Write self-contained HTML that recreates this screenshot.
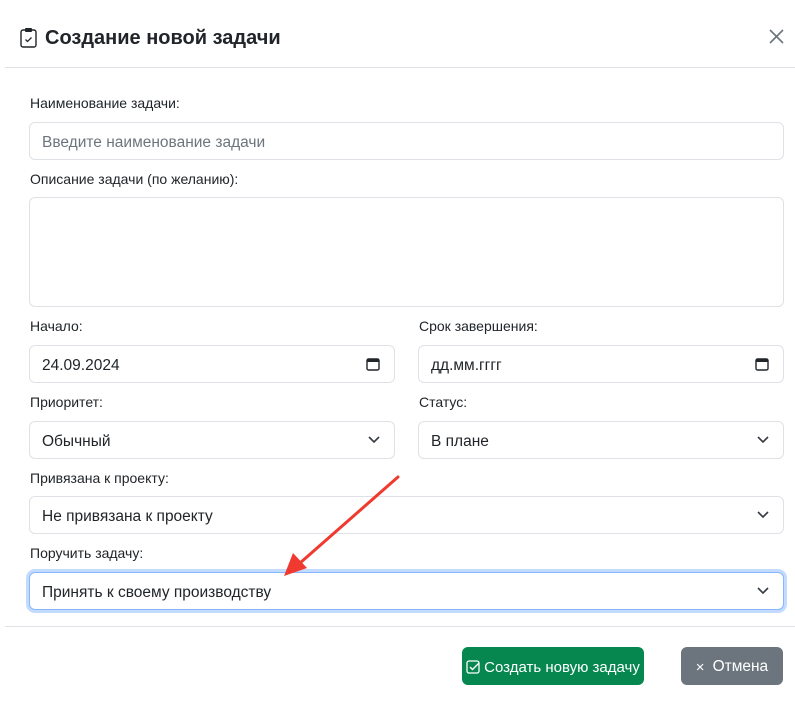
<!DOCTYPE html>
<html><head><meta charset="utf-8"><style>
*{box-sizing:border-box;margin:0;padding:0}
body{width:795px;height:712px;background:#fff;font-family:"Liberation Sans",sans-serif;color:#212529;position:relative;overflow:hidden}
.a{position:absolute}
.lbl{position:absolute;font-size:14px;color:#212529}
.in{position:absolute;border:1px solid #dee2e6;border-radius:6px;background:#fff;font-size:15.5px;padding-left:12px;padding-top:3px;display:flex;align-items:center;height:38px}
.chev{position:absolute;right:14px;top:13px}
</style></head><body>
<svg class="a" style="left:20px;top:27px" width="17" height="21" viewBox="0 0 17 21"><rect x="1" y="3" width="15" height="17" rx="2" fill="none" stroke="#212529" stroke-width="1.4"/><rect x="5" y="1" width="7" height="4" rx="1" fill="#212529"/><path d="M5.5 12.5l2 2 4-4" fill="none" stroke="#212529" stroke-width="1.3"/></svg>
<div class="a" style="left:45px;top:27px;font-size:20px;font-weight:bold;color:#212529">Создание новой задачи</div>
<svg class="a" style="left:769px;top:29px" width="15" height="15"><path d="M1 1L14 14M14 1L1 14" stroke="#6c757d" stroke-width="1.6"/></svg>
<div class="a" style="left:5px;top:67px;width:790px;height:1px;background:#dee2e6"></div>

<div class="lbl" style="left:30px;top:95px">Наименование задачи:</div>
<div class="in" style="left:29px;top:122px;width:755px;color:#6c757d">Введите наименование задачи</div>
<div class="lbl" style="left:30px;top:171px">Описание задачи (по желанию):</div>
<div class="in" style="left:29px;top:197px;width:755px;height:110px"></div>

<div class="lbl" style="left:30px;top:318px">Начало:</div>
<div class="in" style="left:29px;top:345px;width:366px">24.09.2024<svg class="chev" style="top:11px" width="14" height="14"><rect x="1" y="2" width="12" height="11" rx="1.5" fill="none" stroke="#212529" stroke-width="1.4"/><rect x="1" y="2" width="12" height="3" fill="#212529"/></svg></div>
<div class="lbl" style="left:419px;top:318px">Срок завершения:</div>
<div class="in" style="left:418px;top:345px;width:366px">дд.мм.гггг<svg class="chev" style="top:11px" width="14" height="14"><rect x="1" y="2" width="12" height="11" rx="1.5" fill="none" stroke="#212529" stroke-width="1.4"/><rect x="1" y="2" width="12" height="3" fill="#212529"/></svg></div>

<div class="lbl" style="left:30px;top:394px">Приоритет:</div>
<div class="in" style="left:29px;top:421px;width:366px">Обычный<svg class="chev" width="12" height="10"><path d="M1 2l5 5 5-5" fill="none" stroke="#343a40" stroke-width="1.6"/></svg></div>
<div class="lbl" style="left:419px;top:394px">Статус:</div>
<div class="in" style="left:418px;top:421px;width:366px">В плане<svg class="chev" width="12" height="10"><path d="M1 2l5 5 5-5" fill="none" stroke="#343a40" stroke-width="1.6"/></svg></div>

<div class="lbl" style="left:30px;top:470px">Привязана к проекту:</div>
<div class="in" style="left:29px;top:496px;width:755px">Не привязана к проекту<svg class="chev" width="12" height="10"><path d="M1 2l5 5 5-5" fill="none" stroke="#343a40" stroke-width="1.6"/></svg></div>
<div class="lbl" style="left:30px;top:545px">Поручить задачу:</div>
<div class="in" style="left:29px;top:572px;width:755px;border-color:#86b7fe;box-shadow:0 0 0 3px rgba(13,110,253,.25)">Принять к своему производству<svg class="chev" width="12" height="10"><path d="M1 2l5 5 5-5" fill="none" stroke="#343a40" stroke-width="1.6"/></svg></div>

<div class="a" style="left:5px;top:626px;width:790px;height:1px;background:#dee2e6"></div>
<div class="a" style="left:462px;top:647px;width:182px;height:38px;background:#05874f;border-radius:6px;color:#fff;font-size:15px;display:flex;align-items:center;justify-content:center;gap:4px;padding-top:2px;white-space:nowrap"><svg width="14" height="14"><rect x="1" y="1" width="12" height="12" rx="2" fill="none" stroke="#fff" stroke-width="1.3"/><path d="M4 7l2.5 2.5L13 3" fill="none" stroke="#fff" stroke-width="1.4"/></svg>Создать новую задачу</div>
<div class="a" style="left:681px;top:647px;width:102px;height:38px;background:#6c757d;border-radius:6px;color:#fff;font-size:15.5px;display:flex;align-items:center;justify-content:center;gap:8px;padding-top:2px"><span style="font-size:15px">×</span>Отмена</div>

<svg class="a" style="left:0;top:0" width="795" height="712"><line x1="398" y1="477" x2="300" y2="563" stroke="#f03a30" stroke-width="3" stroke-linecap="round"/><path d="M284 576L293 553L307 568Z" fill="#f03a30"/></svg>
</body></html>
